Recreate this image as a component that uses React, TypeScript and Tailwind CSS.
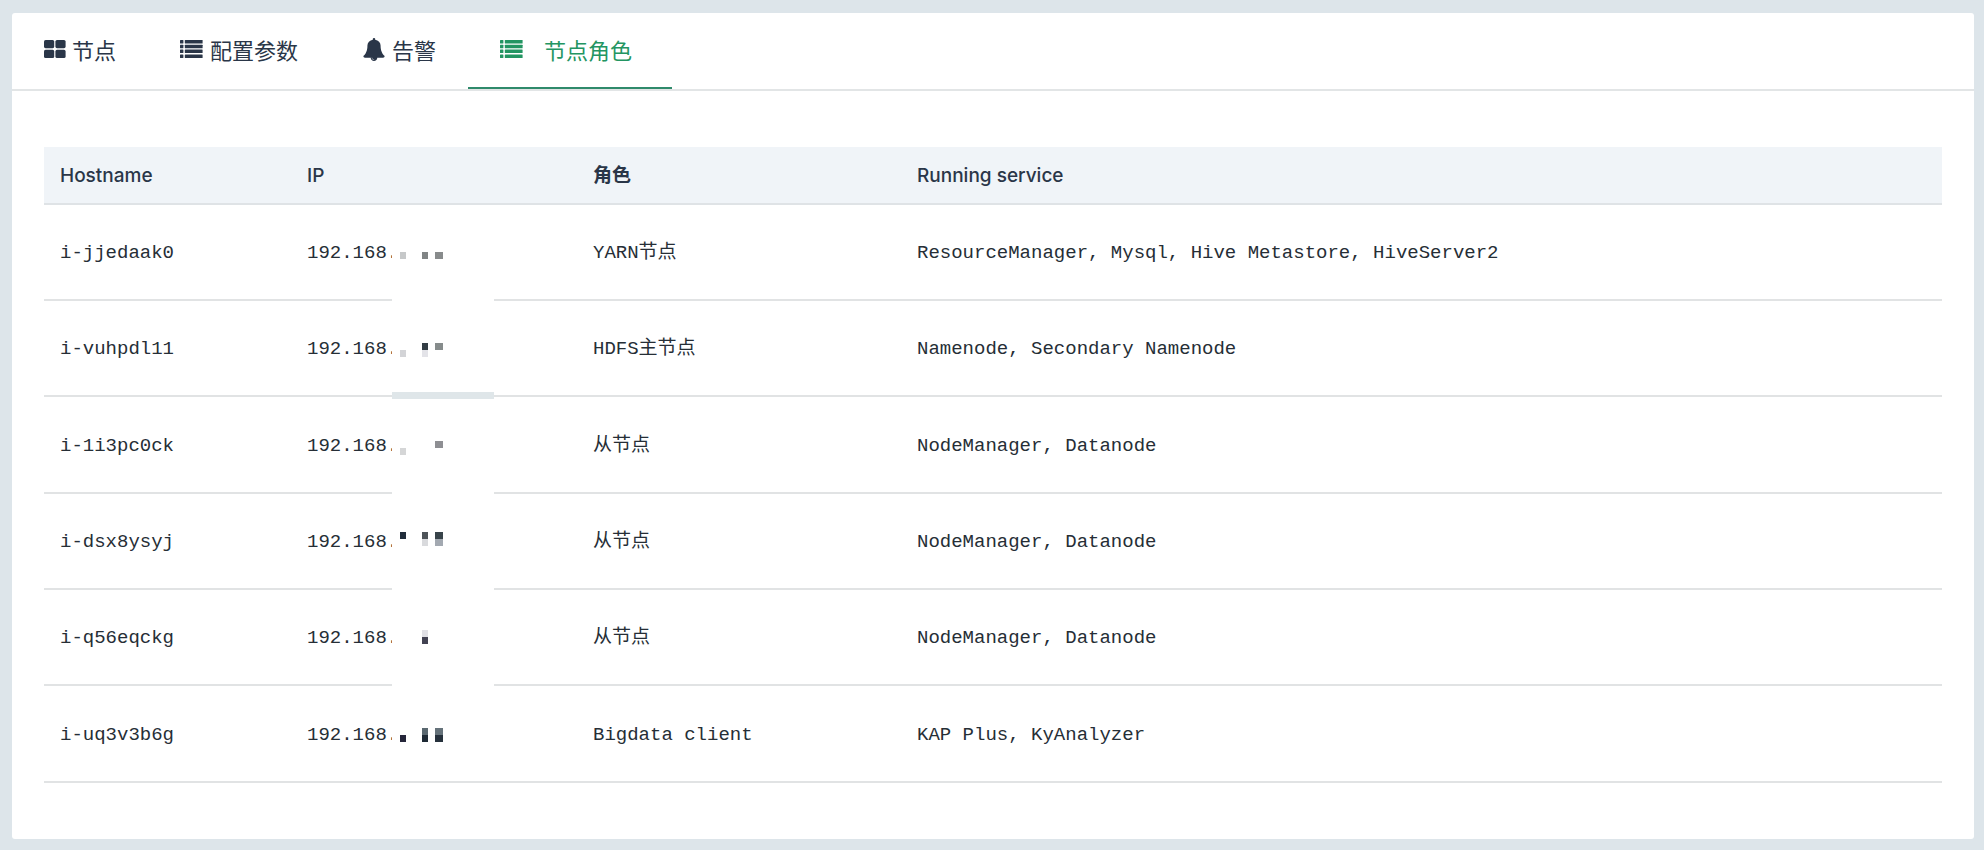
import clsx from "clsx";

type Pixel = { x: number; y: number; w: number; color: string };

type NodeRow = {
  hostname: string;
  ip: string;
  role: string;
  services: string[];
  pixels: Pixel[];
  divider: "hidden" | "thick" | "visible";
};

const rows: NodeRow[] = [
  {
    hostname: "i-jjedaak0",
    ip: "192.168.",
    role: "YARN节点",
    services: ["ResourceManager", "Mysql", "Hive Metastore", "HiveServer2"],
    divider: "hidden",
    pixels: [
      { x: 8, y: 47, w: 6, color: "#c6c8c9" },
      { x: 30, y: 47, w: 6, color: "#808485" },
      { x: 43, y: 47, w: 8, color: "#888b8c" },
    ],
  },
  {
    hostname: "i-vuhpdl11",
    ip: "192.168.",
    role: "HDFS主节点",
    services: ["Namenode", "Secondary Namenode"],
    divider: "thick",
    pixels: [
      { x: 8, y: 49, w: 6, color: "#d3d4d7" },
      { x: 30, y: 42, w: 6, color: "#333d45" },
      { x: 30, y: 49, w: 6, color: "#e3e3e8" },
      { x: 43, y: 42, w: 8, color: "#868c8c" },
    ],
  },
  {
    hostname: "i-1i3pc0ck",
    ip: "192.168.",
    role: "从节点",
    services: ["NodeManager", "Datanode"],
    divider: "hidden",
    pixels: [
      { x: 8, y: 51, w: 6, color: "#d5d6d7" },
      { x: 43, y: 44, w: 8, color: "#8e8f93" },
    ],
  },
  {
    hostname: "i-dsx8ysyj",
    ip: "192.168.",
    role: "从节点",
    services: ["NodeManager", "Datanode"],
    divider: "hidden",
    pixels: [
      { x: 8, y: 38, w: 6, color: "#212d3b" },
      { x: 30, y: 38, w: 6, color: "#4d5358" },
      { x: 30, y: 45, w: 6, color: "#d9dadd" },
      { x: 43, y: 38, w: 8, color: "#38434a" },
      { x: 43, y: 45, w: 8, color: "#a3a9b1" },
    ],
  },
  {
    hostname: "i-q56eqckg",
    ip: "192.168.",
    role: "从节点",
    services: ["NodeManager", "Datanode"],
    divider: "hidden",
    pixels: [
      { x: 30, y: 40, w: 6, color: "#e0e0e5" },
      { x: 30, y: 47, w: 6, color: "#424252" },
    ],
  },
  {
    hostname: "i-uq3v3b6g",
    ip: "192.168.",
    role: "Bigdata client",
    services: ["KAP Plus", "KyAnalyzer"],
    divider: "visible",
    pixels: [
      { x: 8, y: 49, w: 6, color: "#25263a" },
      { x: 30, y: 42, w: 6, color: "#5a6870" },
      { x: 30, y: 49, w: 6, color: "#1e2a35" },
      { x: 43, y: 42, w: 8, color: "#65727a" },
      { x: 43, y: 49, w: 8, color: "#26313c" },
    ],
  },
];

function GridIcon() {
  return (
    <svg width="22" height="18" viewBox="0 0 22 18" fill="currentColor" aria-hidden="true">
      <rect x="0" y="0" width="10.2" height="8.2" rx="1.6" />
      <rect x="11.4" y="0" width="10.2" height="8.2" rx="1.6" />
      <rect x="0" y="9.8" width="10.2" height="8.2" rx="1.6" />
      <rect x="11.4" y="9.8" width="10.2" height="8.2" rx="1.6" />
    </svg>
  );
}

function ListIcon() {
  return (
    <svg width="24" height="18" viewBox="0 0 24 18" fill="currentColor" aria-hidden="true">
      {[0, 4.8, 9.6, 14.4].map((y) => (
        <g key={y}>
          <rect x="0" y={y} width="3.4" height="3.5" rx="0.5" />
          <rect x="4.8" y={y} width="17.8" height="3.5" rx="0.5" />
        </g>
      ))}
    </svg>
  );
}

function BellIcon() {
  return (
    <svg width="24" height="23" viewBox="0 0 1792 1792" fill="currentColor" aria-hidden="true">
      <path d="M912 1696q0-16-16-16-59 0-101.500-42.500t-42.500-101.500q0-16-16-16t-16 16q0 73 51.500 124.500t124.500 51.500q16 0 16-16zM1728 1408q0 52-38 90t-90 38h-448q0 106-75 181t-181 75-181-75-75-181h-448q-52 0-90-38t-38-90q50-42 91-88t85-119.500 74.500-158.500 50-206 19.500-260q0-152 117-282.500t307-158.500q-8-19-8-39 0-40 28-68t68-28 68 28 28 68q0 20-8 39 190 28 307 158.500t117 282.500q0 139 19.500 260t50 206 74.500 158.500 85 119.500 91 88z" />
    </svg>
  );
}

const tabs = [
  { label: "节点", icon: <GridIcon />, active: false },
  { label: "配置参数", icon: <ListIcon />, active: false },
  { label: "告警", icon: <BellIcon />, active: false },
  { label: "节点角色", icon: <ListIcon />, active: true },
];

// Covers the last two octets of the address
function IpMask({ row }: { row: NodeRow }) {
  return (
    <div
      className={clsx(
        "absolute top-0 left-[101px] w-[102px] bg-white",
        row.divider === "hidden" ? "-bottom-0.5" : "bottom-0",
      )}
    >
      <svg width="102" height="94" viewBox="0 0 102 94" shapeRendering="crispEdges" aria-hidden="true">
        {row.pixels.map((p) => (
          <rect key={`${p.x}-${p.y}`} x={p.x} y={p.y} width={p.w} height="7" fill={p.color} />
        ))}
      </svg>
      {row.divider === "thick" && (
        <div className="absolute inset-x-0 -bottom-1 z-10 h-[7px] bg-[#dfe6e9]" />
      )}
    </div>
  );
}

export default function App() {
  return (
    <main className="min-h-screen bg-[#dde5ea] pt-[13px] pr-2.5 pb-[11px] pl-3 font-['Inter','Noto_Sans_CJK_SC',sans-serif] text-[#2a3648]">
      <section className="rounded-[3px] bg-white">
        <div role="tablist" className="flex h-[78px] border-b-2 border-[#e2e5e6]">
          {tabs.map((tab) => (
            <button
              key={tab.label}
              type="button"
              role="tab"
              aria-selected={tab.active}
              className={clsx(
                "flex items-center border-b-2 pt-0.5 pl-8 text-[22px] leading-8",
                tab.active
                  ? "gap-5 border-[#2f8a6b] pr-10 text-[#239562]"
                  : "gap-1.5 border-transparent pr-8",
              )}
            >
              <span className="pb-1">{tab.icon}</span>
              <span>{tab.label}</span>
            </button>
          ))}
        </div>

        <div className="px-8 py-14">
          <table className="w-full table-fixed border-separate border-spacing-0 text-left text-[19px] leading-7">
            <thead>
              <tr className="h-[58px] bg-[#f0f4f8] *:border-b-2 *:border-[#dfe3e6] *:px-4 *:pt-0.5">
                <th className="w-[247px] font-medium">Hostname</th>
                <th className="w-[286px] font-medium">IP</th>
                <th className="w-[324px] font-bold">角色</th>
                <th className="font-medium">Running service</th>
              </tr>
            </thead>
            <tbody className="font-['Liberation_Mono','Noto_Sans_CJK_SC',monospace] text-[#262e36]">
              {rows.map((row) => (
                <tr
                  key={row.hostname}
                  className="h-24 *:border-b-2 *:border-[#e1e3e4] *:px-4 *:pt-0.5 nth-[3n]:h-[97px]"
                >
                  <td>{row.hostname}</td>
                  <td className="relative">
                    {row.ip}
                    <IpMask row={row} />
                  </td>
                  <td>{row.role}</td>
                  <td>{row.services.join(", ")}</td>
                </tr>
              ))}
            </tbody>
          </table>
        </div>
      </section>
    </main>
  );
}
